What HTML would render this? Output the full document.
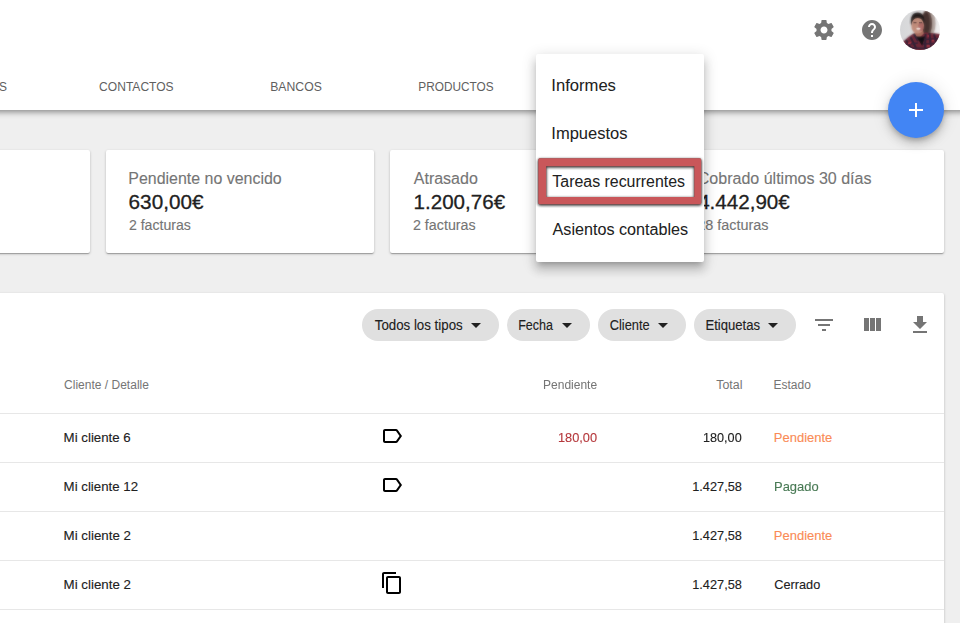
<!DOCTYPE html><html lang="es"><head><meta charset="utf-8"><title>Facturas</title><style>
html,body{margin:0;padding:0}
body{width:960px;height:623px;overflow:hidden;position:relative;background:#efefef;font-family:"Liberation Sans",sans-serif;-webkit-font-smoothing:antialiased}
.t{-webkit-text-stroke:0.12px;position:absolute;white-space:nowrap;line-height:1;transform-origin:0 0;display:block}
#hdr{position:absolute;left:-10px;top:-10px;width:980px;height:120px;background:#fff;box-shadow:0 2px 6px rgba(0,0,0,.44)}
.card{position:absolute;top:150px;height:103px;background:#fff;border-radius:2px;box-shadow:0 1px 3px 0 rgba(0,0,0,.2),0 1px 1px 0 rgba(0,0,0,.14),0 2px 1px -1px rgba(0,0,0,.12)}
#tbl{position:absolute;left:-20px;top:293px;width:964px;height:400px;background:#fff;border-radius:2px;box-shadow:0 1px 3px 0 rgba(0,0,0,.2),0 1px 1px 0 rgba(0,0,0,.14),0 2px 1px -1px rgba(0,0,0,.12)}
.ln{position:absolute;left:0;width:944px;height:1px;background:#e7e7e7}
.chip{position:absolute;top:309px;height:32px;border-radius:16px;background:#e0e0e0}
svg{position:absolute;display:block;overflow:visible}
#menu{position:absolute;left:536px;top:54px;width:168px;height:208px;background:#fff;border-radius:2px;box-shadow:0 5px 5px -3px rgba(0,0,0,.2),0 8px 10px 1px rgba(0,0,0,.14),0 3px 14px 2px rgba(0,0,0,.12)}
#red{left:530px;top:150px;filter:drop-shadow(0 1.500px 1.800px rgba(0,0,0,.75)) drop-shadow(0 0 .700px rgba(0,0,0,.5))}
#fab{position:absolute;left:888px;top:82px;width:56px;height:56px;border-radius:50%;background:#4285f4;box-shadow:0 3px 5px -1px rgba(0,0,0,.2),0 6px 10px 0 rgba(0,0,0,.14),0 1px 18px 0 rgba(0,0,0,.12)}
</style></head><body>
<div class="card" style="left:-178px;width:268px"></div>
<div class="card" style="left:106px;width:268px"></div>
<div class="card" style="left:390px;width:268px"></div>
<div class="card" style="left:674px;width:270px"></div>
<span class="t" style="left:128px;top:170px;font-size:16px;color:#757575;transform:translate(0.35px,0.70px) scaleX(0.9964)">Pendiente no vencido</span>
<span class="t" style="left:128px;top:191px;font-size:20px;color:#212121;transform:translate(0.60px,0.90px) scaleX(1.0358);-webkit-text-stroke-width:0.28px">630,00€</span>
<span class="t" style="left:128px;top:217px;font-size:14px;color:#757575;transform:translate(0.90px,0.50px) scaleX(1.0083)">2 facturas</span>
<span class="t" style="left:413px;top:170px;font-size:16px;color:#757575;transform:translate(0.80px,0.70px) scaleX(0.9992)">Atrasado</span>
<span class="t" style="left:413px;top:191px;font-size:20px;color:#212121;transform:translate(0.60px,0.90px) scaleX(1.0281);-webkit-text-stroke-width:0.28px">1.200,76€</span>
<span class="t" style="left:412px;top:217px;font-size:14px;color:#757575;transform:translate(0.95px,0.50px) scaleX(1.0207)">2 facturas</span>
<span class="t" style="left:697px;top:170px;font-size:16px;color:#757575;transform:translate(0.75px,0.70px) scaleX(1.0015)">Cobrado últimos 30 días</span>
<span class="t" style="left:698px;top:191px;font-size:20px;color:#212121;transform:translate(0.15px,0.90px) scaleX(1.0299);-webkit-text-stroke-width:0.28px">4.442,90€</span>
<span class="t" style="left:697px;top:217px;font-size:14px;color:#757575;transform:translate(0.25px,0.50px) scaleX(1.0293)">28 facturas</span>
<div id="tbl"></div>
<div class="ln" style="top:413px"></div>
<div class="ln" style="top:462px"></div>
<div class="ln" style="top:511px"></div>
<div class="ln" style="top:560px"></div>
<div class="ln" style="top:609px"></div>
<div class="chip" style="left:362px;width:136.8px"></div>
<div class="chip" style="left:507px;width:82.60000000000002px"></div>
<div class="chip" style="left:597.6px;width:88.10000000000002px"></div>
<div class="chip" style="left:694.3px;width:101.60000000000002px"></div>
<svg style="left:463.5px;top:312.8px" width="24" height="24" viewBox="0 0 24 24"><path fill="#212121" d="M7 10l5 5 5-5z"/></svg>
<svg style="left:555px;top:312.8px" width="24" height="24" viewBox="0 0 24 24"><path fill="#212121" d="M7 10l5 5 5-5z"/></svg>
<svg style="left:651px;top:312.8px" width="24" height="24" viewBox="0 0 24 24"><path fill="#212121" d="M7 10l5 5 5-5z"/></svg>
<svg style="left:760.5px;top:312.8px" width="24" height="24" viewBox="0 0 24 24"><path fill="#212121" d="M7 10l5 5 5-5z"/></svg>
<svg style="left:812.3px;top:313px" width="24" height="24" viewBox="0 0 24 24"><path fill="#757575" d="M10 18h4v-2h-4v2zM3 6v2h18V6H3zm3 7h12v-2H6v2z"/></svg>
<svg style="left:860.1px;top:312.6px" width="24" height="24" viewBox="0 0 24 24"><path fill="#757575" d="M10 18h5V5h-5v13zm-6 0h5V5H4v13zM16 5v13h5V5h-5z"/></svg>
<svg style="left:908.2px;top:313.3px" width="24" height="24" viewBox="0 0 24 24"><path fill="#757575" d="M19 9h-4V3H9v6H5l7 7 7-7zM5 18v2h14v-2H5z"/></svg>
<svg style="left:380.1px;top:424px" width="24" height="24" viewBox="0 0 24 24"><path fill="#000" d="M17.630 5.840C17.270 5.330 16.670 5 16 5L5 5.010C3.900 5.010 3 5.900 3 7v10c0 1.100.9 1.990 2 1.990L16 19c.670 0 1.270-.330 1.630-.840L22 12l-4.370-6.160zM16 17H5V7h11l3.550 5L16 17z"/></svg>
<svg style="left:380.1px;top:473px" width="24" height="24" viewBox="0 0 24 24"><path fill="#000" d="M17.630 5.840C17.270 5.330 16.670 5 16 5L5 5.010C3.900 5.010 3 5.900 3 7v10c0 1.100.9 1.990 2 1.990L16 19c.670 0 1.270-.330 1.630-.840L22 12l-4.370-6.160zM16 17H5V7h11l3.550 5L16 17z"/></svg>
<svg style="left:380px;top:571px" width="24" height="24" viewBox="0 0 24 24"><path fill="#000" d="M16 1H4c-1.100 0-2 .9-2 2v14h2V3h12V1zm3 4H8c-1.100 0-2 .9-2 2v14c0 1.100.9 2 2 2h11c1.100 0 2-.9 2-2V7c0-1.100-.9-2-2-2zm0 16H8V7h11v14z"/></svg>
<span class="t" style="left:374px;top:318px;font-size:14px;color:#212121;transform:translate(0.75px,0.00px) scaleX(0.9495)">Todos los tipos</span>
<span class="t" style="left:518px;top:318px;font-size:14px;color:#212121;transform:translate(0.20px,0.00px) scaleX(0.8934)">Fecha</span>
<span class="t" style="left:609px;top:318px;font-size:14px;color:#212121;transform:translate(0.70px,0.00px) scaleX(0.9160)">Cliente</span>
<span class="t" style="left:705px;top:318px;font-size:14px;color:#212121;transform:translate(0.40px,0.00px) scaleX(0.9360)">Etiquetas</span>
<span class="t" style="left:64px;top:379px;font-size:12px;color:#757575;transform:translate(0.10px,0.00px) scaleX(1.0012);-webkit-text-stroke-width:0.02px">Cliente / Detalle</span>
<span class="t" style="left:543px;top:379px;font-size:12px;color:#757575;transform:translate(0.00px,0.00px) scaleX(1.0019);-webkit-text-stroke-width:0.02px">Pendiente</span>
<span class="t" style="left:716px;top:379px;font-size:12px;color:#757575;transform:translate(0.25px,0.00px) scaleX(1.0330);-webkit-text-stroke-width:0.02px">Total</span>
<span class="t" style="left:773px;top:379px;font-size:12px;color:#757575;transform:translate(0.50px,0.00px) scaleX(0.9986);-webkit-text-stroke-width:0.02px">Estado</span>
<span class="t" style="left:63px;top:431px;font-size:13px;color:#212121;transform:translate(0.60px,0.00px) scaleX(1.0210)">Mi cliente 6</span>
<span class="t" style="left:63px;top:480px;font-size:13px;color:#212121;transform:translate(0.60px,0.00px) scaleX(1.0203)">Mi cliente 12</span>
<span class="t" style="left:63px;top:529px;font-size:13px;color:#212121;transform:translate(0.60px,0.00px) scaleX(1.0249)">Mi cliente 2</span>
<span class="t" style="left:63px;top:578px;font-size:13px;color:#212121;transform:translate(0.60px,0.00px) scaleX(1.0249)">Mi cliente 2</span>
<span class="t" style="left:558px;top:431px;font-size:13px;color:#b5383c;transform:translate(0.00px,0.00px) scaleX(0.9830)">180,00</span>
<span class="t" style="left:703px;top:431px;font-size:13px;color:#212121;transform:translate(0.00px,0.00px) scaleX(0.9726)">180,00</span>
<span class="t" style="left:692px;top:480px;font-size:13px;color:#212121;transform:translate(0.20px,0.00px) scaleX(0.9816)">1.427,58</span>
<span class="t" style="left:692px;top:529px;font-size:13px;color:#212121;transform:translate(0.20px,0.00px) scaleX(0.9816)">1.427,58</span>
<span class="t" style="left:692px;top:578px;font-size:13px;color:#212121;transform:translate(0.20px,0.00px) scaleX(0.9816)">1.427,58</span>
<span class="t" style="left:773px;top:431px;font-size:13px;color:#fa8b56;transform:translate(0.80px,0.00px) scaleX(1.0000)">Pendiente</span>
<span class="t" style="left:774px;top:480px;font-size:13px;color:#497a55;transform:translate(0.00px,0.00px) scaleX(0.9965)">Pagado</span>
<span class="t" style="left:773px;top:529px;font-size:13px;color:#fa8b56;transform:translate(0.80px,0.00px) scaleX(1.0000)">Pendiente</span>
<span class="t" style="left:774px;top:578px;font-size:13px;color:#212121;transform:translate(0.30px,0.00px) scaleX(0.9783)">Cerrado</span>
<div id="hdr"></div>
<span class="t" style="left:-43px;top:80px;font-size:13px;color:#5f5f5f;transform:translate(0.30px,0.00px) scaleX(0.9200);-webkit-text-stroke-width:0.02px">GASTOS</span>
<span class="t" style="left:99px;top:80px;font-size:13px;color:#5f5f5f;transform:translate(0.10px,0.00px) scaleX(0.9272);-webkit-text-stroke-width:0.02px">CONTACTOS</span>
<span class="t" style="left:270px;top:80px;font-size:13px;color:#5f5f5f;transform:translate(0.20px,0.00px) scaleX(0.9399);-webkit-text-stroke-width:0.02px">BANCOS</span>
<span class="t" style="left:418px;top:80px;font-size:13px;color:#5f5f5f;transform:translate(0.30px,0.00px) scaleX(0.9089);-webkit-text-stroke-width:0.02px">PRODUCTOS</span>
<span class="t" style="left:600px;top:80px;font-size:13px;color:#5f5f5f;transform:translate(0.00px,0.00px) scaleX(1.0473);-webkit-text-stroke-width:0.02px">MÁS</span>
<svg style="left:812px;top:18px" width="24" height="24" viewBox="0 0 24 24"><path fill="#757575" d="M19.43 12.98c.04-.32.07-.64.07-.98s-.03-.66-.07-.98l2.11-1.65c.19-.15.24-.42.12-.64l-2-3.46c-.12-.22-.39-.3-.61-.22l-2.49 1c-.52-.4-1.08-.73-1.69-.98l-.38-2.65C14.46 2.18 14.25 2 14 2h-4c-.25 0-.46.18-.49.42l-.38 2.65c-.61.25-1.17.59-1.69.98l-2.49-1c-.23-.09-.49 0-.61.22l-2 3.46c-.13.22-.07.49.12.64l2.11 1.65c-.04.32-.07.65-.07.98s.03.66.07.98l-2.11 1.65c-.19.15-.24.42-.12.64l2 3.46c.12.22.39.3.61.22l2.49-1c.52.4 1.08.73 1.69.98l.38 2.65c.03.24.24.42.49.42h4c.25 0 .46-.18.49-.42l.38-2.65c.61-.25 1.17-.59 1.69-.98l2.49 1c.23.09.49 0 .61-.22l2-3.46c.12-.22.07-.49-.12-.64l-2.11-1.65zM12 15.5c-1.93 0-3.5-1.57-3.5-3.5s1.570-3.500 3.5-3.500 3.500 1.570 3.500 3.500-1.570 3.500-3.500 3.500z"/></svg>
<svg style="left:860px;top:18px" width="24" height="24" viewBox="0 0 24 24"><path fill="#757575" d="M12 2C6.480 2 2 6.480 2 12s4.480 10 10 10 10-4.480 10-10S17.520 2 12 2zm1 17h-2v-2h2v2zm2.070-7.750l-.9.920C13.450 12.900 13 13.500 13 15h-2v-.5c0-1.100.450-2.100 1.170-2.830l1.240-1.260c.370-.360.590-.860.590-1.410 0-1.100-.9-2-2-2s-2 .9-2 2H8c0-2.210 1.790-4 4-4s4 1.790 4 4c0 .880-.360 1.680-.930 2.250z"/></svg>
<svg style="left:900px;top:10px" width="40" height="40" viewBox="0 0 40 40">
<defs><clipPath id="ac"><circle cx="20" cy="20" r="20"/></clipPath><filter id="ab" x="-20%" y="-20%" width="140%" height="140%"><feGaussianBlur stdDeviation="0.85"/></filter>
<linearGradient id="abg" x1="0" y1="0" x2="1" y2="0"><stop offset="0" stop-color="#d4d5d7"/><stop offset="0.55" stop-color="#dfdfe0"/><stop offset="1" stop-color="#f6f5f5"/></linearGradient>
<linearGradient id="ash" gradientUnits="userSpaceOnUse" x1="23" y1="0" x2="37" y2="0"><stop offset="0" stop-color="#3a2827"/><stop offset="0.450" stop-color="#5b423e"/><stop offset="0.750" stop-color="#a8948e" stop-opacity="0.800"/><stop offset="1" stop-color="#f0ecec" stop-opacity="0"/></linearGradient></defs>
<g clip-path="url(#ac)">
<rect x="-5" y="-5" width="50" height="50" fill="url(#abg)"/>
<defs><g id="avs">
<ellipse cx="28" cy="13.500" rx="7.500" ry="14" fill="#9a857f" opacity="0.600"/><ellipse cx="26.800" cy="13.500" rx="5.200" ry="12.800" fill="#5a443f"/><ellipse cx="25.800" cy="13.500" rx="3.600" ry="11.500" fill="#45322f"/>
<path d="M15 20 L23 20 L24.500 28 L15 28 Z" fill="#a96a5e"/>
<ellipse cx="17.700" cy="15.600" rx="6.200" ry="7.900" fill="#c08c7a"/>
<ellipse cx="21" cy="16.500" rx="2.700" ry="4.500" fill="#a5575a" opacity="0.600"/>
<path d="M11.100 15.500 Q9.800 2.500 17.700 2.700 Q25.500 2.500 24.300 15.500 Q23.600 8.300 17.700 8 Q12 8.300 11.100 15.500Z" fill="#231c1c"/>
<path d="M13.500 12.600 L16.500 12.600 M19 12.600 L22 12.600" stroke="#5a3a38" stroke-width="1.100"/>
<ellipse cx="18.400" cy="18.700" rx="2.100" ry="0.950" fill="#f6e4de"/>
<path d="M3 32 Q8 27 14.200 23.200 L18 29 L24.800 22.600 Q32 23 41 24.500 L42 45 L0 45 Z" fill="#702839"/>
<path d="M6 30 L12 40 M10.500 27 L16 38 M14 24 L18 31 M25.500 24 L25 40 M29.500 23 L31 40 M34 24 L37 36" stroke="#2b2234" stroke-width="2" fill="none"/>
<path d="M3 35 L18 33 M25 29.500 L40 28.500 M23 34 L40 33.500 M8 38 L32 38.500" stroke="#33243a" stroke-width="1.600" fill="none"/>
<path d="M8 33.500 L11 32.800 M27.500 26 L29 26 M32 30.500 L34 30.500 M27 36 L30 36" stroke="#b23a48" stroke-width="1.600" fill="none"/>
<path d="M16.300 26.600 L25 26.600 L22.200 36 Z" fill="#101016"/>
</g></defs>
<use href="#avs" filter="url(#ab)"/><use href="#avs" opacity="0.450"/>
</g></svg>
<div id="fab"></div>
<svg style="left:904px;top:98px" width="24" height="24" viewBox="0 0 24 24"><path fill="#fff" d="M19 13h-6v6h-2v-6H5v-2h6V5h2v6h6v2z"/></svg>
<div id="menu"></div>
<svg id="red" width="180" height="64" viewBox="530 150 180 64"><path fill="#c9575a" fill-rule="evenodd" d="M539.800 158.300H699.700a1.500 1.500 0 0 1 1.500 1.500V202.700a1.500 1.500 0 0 1 -1.500 1.500H539.800a1.500 1.500 0 0 1 -1.500 -1.500V159.800a1.500 1.500 0 0 1 1.500 -1.500ZM546.200 166.200V197.100H694.300V166.200Z"/></svg>
<span class="t" style="left:551px;top:77px;font-size:16px;color:#212121;transform:translate(0.30px,0.70px) scaleX(1.0382);-webkit-text-stroke-width:0.04px">Informes</span>
<span class="t" style="left:551px;top:125px;font-size:16px;color:#212121;transform:translate(0.30px,0.80px) scaleX(1.0314);-webkit-text-stroke-width:0.04px">Impuestos</span>
<span class="t" style="left:552px;top:173px;font-size:16px;color:#212121;transform:translate(0.35px,0.60px) scaleX(0.9940);-webkit-text-stroke-width:0.04px">Tareas recurrentes</span>
<span class="t" style="left:552px;top:221px;font-size:16px;color:#212121;transform:translate(0.60px,0.60px) scaleX(1.0093);-webkit-text-stroke-width:0.04px">Asientos contables</span>
</body></html>
